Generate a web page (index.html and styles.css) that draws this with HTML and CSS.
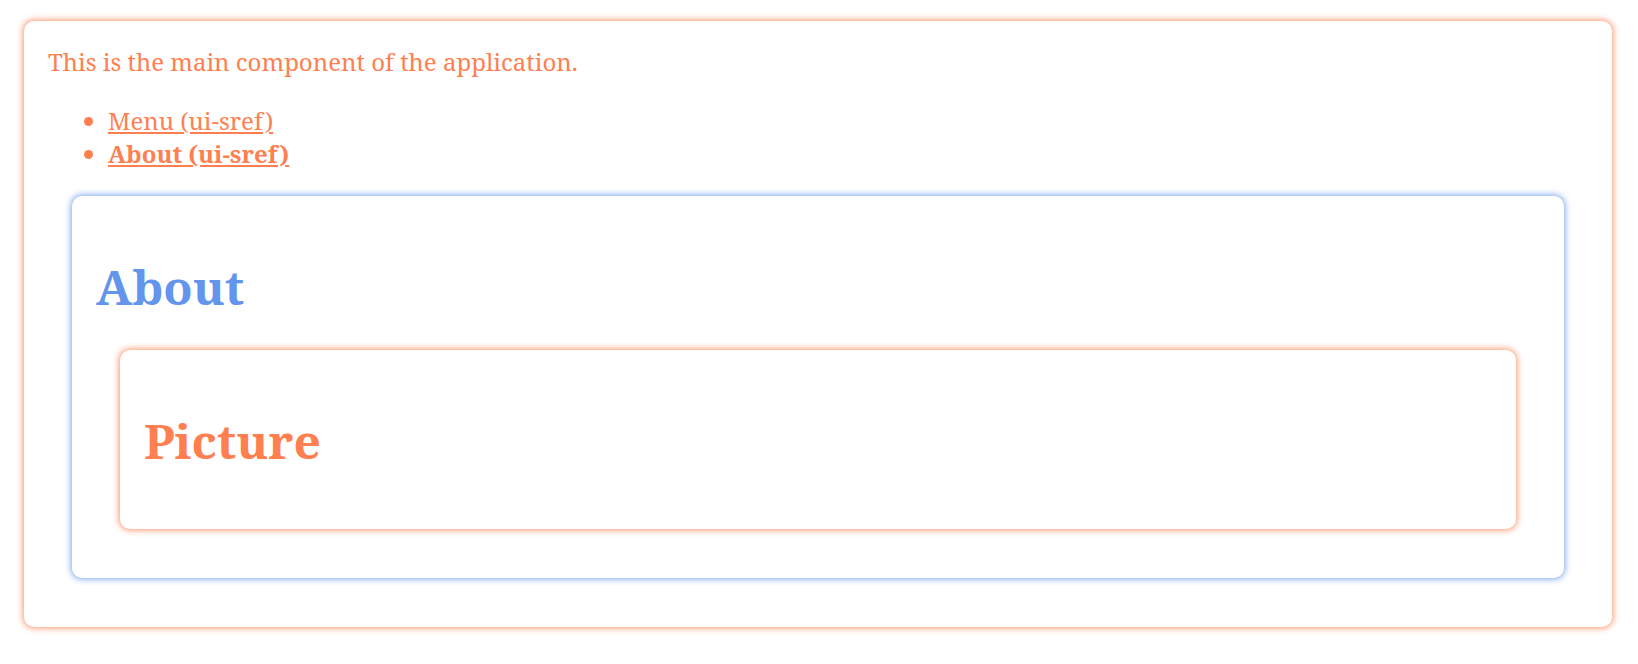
FILE: index.html
```html
<!DOCTYPE html>
<html lang="en">
<head>
<meta charset="utf-8">
<title>App</title>
<link rel="stylesheet" href="styles.css">
</head>
<body>
  <div class="card card-main">
    <p class="intro">This is the main component of the application.</p>
    <ul class="nav">
      <li><a class="nav-link" href="#">Menu (ui-sref)</a></li>
      <li><a class="nav-link active" href="#">About (ui-sref)</a></li>
    </ul>
    <div class="card card-about">
      <h1 class="title title-about">About</h1>
      <div class="card card-picture">
        <h1 class="title title-picture">Picture</h1>
      </div>
    </div>
  </div>
</body>
</html>
```

FILE: styles.css
```css
html, body {
  margin: 0;
  padding: 0;
  background: #ffffff;
}

body {
  font-family: "Noto Serif", "DejaVu Serif", serif;
  font-size: 24px;
  color: #ff7f50;
  padding: 21px 26px 30px 24px;
}

.card {
  background: #ffffff;
  border-radius: 10px;
}

.card-main {
  padding: 24px 24px 25px 24px;
  box-shadow: 0 0 6px 1px rgba(255, 127, 80, 0.85);
}

.intro {
  margin: 0;
}

.nav {
  margin: 26px 0 0 0;
  padding-left: 60px;
}

.nav-link {
  color: #ff7f50;
  text-decoration: underline;
}

.nav-link.active {
  font-weight: bold;
}

.card-about {
  margin: 26px 24px 24px 24px;
  padding: 26px 24px 25px 24px;
  box-shadow: 0 0 6px 1px rgba(100, 149, 237, 0.85);
}

.card-picture {
  margin: 24px;
  padding: 26px 24px 25px 24px;
  box-shadow: 0 0 6px 1px rgba(255, 127, 80, 0.85);
}

.title {
  font-size: 48px;
  font-weight: bold;
  margin: 32px 0 31px 0;
}

.title-about {
  color: #6495ed;
}

.title-picture {
  color: #ff7f50;
}
```
